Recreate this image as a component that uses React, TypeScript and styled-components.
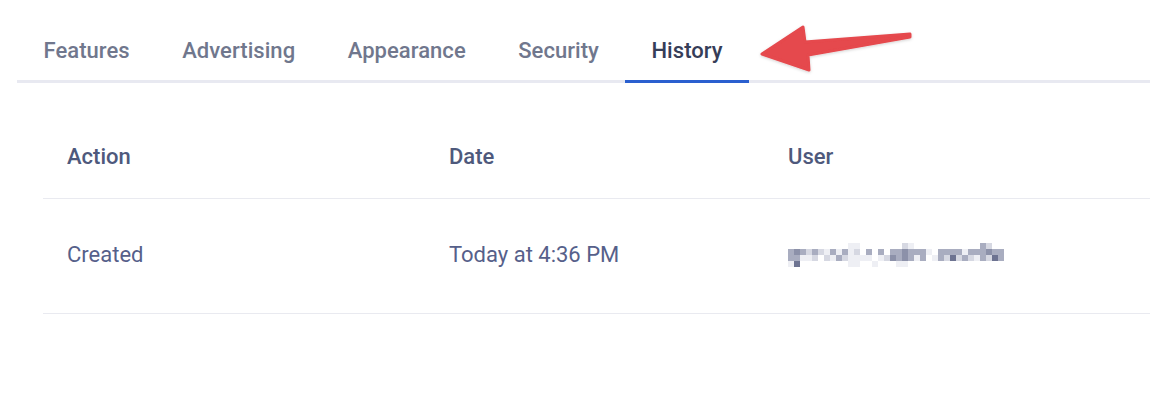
import React from "react";
import styled, { createGlobalStyle } from "styled-components";

const GlobalStyle = createGlobalStyle`
  html, body { margin: 0; padding: 0; background: #ffffff; }
  body { font-family: Roboto, "Noto Sans", Arial, sans-serif; -webkit-font-smoothing: antialiased; }
`;

const Page = styled.div`
  position: relative;
  width: 1172px;
  height: 400px;
  padding: 20px 22px 0 17px;
  box-sizing: border-box;
`;

const TabBar = styled.div`
  display: flex;
  border-bottom: 3px solid #e8e9f1;
`;

const Tab = styled.div<{ $active?: boolean }>`
  height: 60px;
  line-height: 62px;
  padding: 0 26px 0 26.5px;
  margin-bottom: -3px;
  font-size: 22px;
  font-weight: 500;
  letter-spacing: 0.05px;
  color: ${(p) => (p.$active ? "#363d58" : "#70778d")};
  border-bottom: 3px solid ${(p) => (p.$active ? "#2a5fcf" : "transparent")};
  white-space: nowrap;
`;

const Table = styled.div`
  margin: 33px 0 0 26px;
`;

const Row = styled.div<{ $height: number; $shift: number }>`
  display: grid;
  grid-template-columns: 382px 339px 1fr;
  align-items: center;
  height: ${(p) => p.$height}px;
  padding-bottom: ${(p) => p.$shift}px;
  box-sizing: border-box;
  border-bottom: 1px solid #e9eaf0;
`;

const HeadCell = styled.div`
  padding-left: 24px;
  font-size: 22px;
  font-weight: 500;
  color: #4e597c;
  line-height: 1;
`;

const Cell = styled.div`
  padding-left: 24px;
  font-size: 22px;
  font-weight: 400;
  color: #56608a;
  line-height: 1;
`;

const ArrowSvg = styled.svg`
  position: absolute;
  left: 750px;
  top: 20px;
  overflow: visible;
`;

const mosaic: number[][] = [
  [0,0,0,0,0,0,0,0,0,0,1,1,0,0,0,0,0,0,0,2,1,0,0,0,0,0,0,0,0,0,0,0,3,2,0,0],
  [3,4,3,2,3,2,1,3,1,3,1,2,0,3,0,3,0,3,3,4,3,3,3,1,0,3,3,3,3,1,3,3,3,4,3,3],
  [3,3,1,1,2,0,2,1,3,2,1,1,1,1,0,1,2,4,3,4,3,1,3,0,1,3,2,5,2,3,2,1,3,2,5,3],
  [1,5,0,0,0,0,0,0,0,0,1,1,0,0,1,0,0,0,1,1,0,0,0,0,0,0,0,0,0,0,0,0,0,0,0,0],
];

const shades = ["transparent", "#eeeff4", "#d6d8e2", "#a9adc0", "#8c91a9", "#6d7391"];

const Mosaic = () => (
  <svg width={216} height={24} viewBox="0 0 216 24" role="img" aria-label="blurred user name" style={{ display: "block" }}>
    {mosaic.map((row, r) =>
      row.map((v, c) =>
        v ? <rect key={`${r}-${c}`} x={c * 6} y={r * 6} width={6} height={6} fill={shades[v]} /> : null
      )
    )}
  </svg>
);

const Arrow = () => (
  <ArrowSvg width={170} height={60} viewBox="0 0 170 60">
    <defs>
      <filter id="sh" x="-20%" y="-40%" width="140%" height="180%">
        <feDropShadow dx="0" dy="1" stdDeviation="1.5" floodColor="#000" floodOpacity="0.18" />
      </filter>
    </defs>
    <path
      d="M12 34 L53 7 L55 22 L160 14 L160 17 L58 35 L59 50 Z"
      fill="#e5484d"
      stroke="#e5484d"
      strokeWidth={3}
      strokeLinejoin="round"
      filter="url(#sh)"
    />
  </ArrowSvg>
);

export default function App() {
  const tabs = ["Features", "Advertising", "Appearance", "Security", "History"];
  return (
    <>
      <GlobalStyle />
      <Page>
        <TabBar>
          {tabs.map((t) => (
            <Tab key={t} $active={t === "History"}>{t}</Tab>
          ))}
        </TabBar>
        <Table>
          <Row $height={83} $shift={0}>
            <HeadCell>Action</HeadCell>
            <HeadCell>Date</HeadCell>
            <HeadCell>User</HeadCell>
          </Row>
          <Row $height={115} $shift={2}>
            <Cell>Created</Cell>
            <Cell>Today at 4:36 PM</Cell>
            <Cell><Mosaic /></Cell>
          </Row>
        </Table>
        <Arrow />
      </Page>
    </>
  );
}
